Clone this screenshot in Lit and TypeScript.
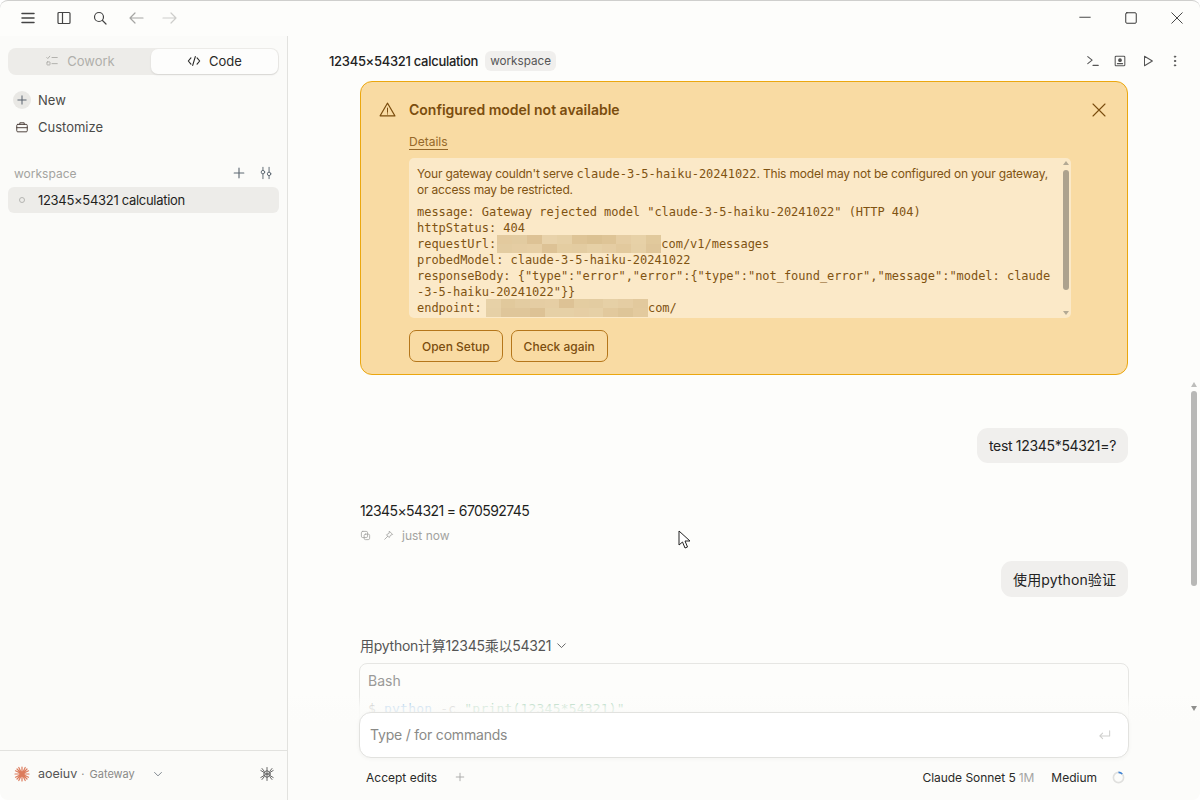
import { LitElement, html, css, svg } from "lit";
import { customElement } from "lit/decorators.js";

const ic = (size: number, body: unknown, sw = 1.2, cls = "") => html`<svg class=${cls} width=${size} height=${size} viewBox="0 0 16 16" fill="none" stroke="currentColor" stroke-width=${sw} stroke-linecap="round" stroke-linejoin="round">${body}</svg>`;

const mosaic = (cols: number, rows: number, seed: number, tile: number) => {
  const cells = [];
  let v = seed;
  for (let i = 0; i < cols * rows; i++) {
    v = (v * 73 + 41) % 101;
    const a = 0.08 + (v / 101) * 0.2;
    cells.push(html`<i style="background:rgba(170,125,60,${a.toFixed(2)});width:${tile}px;height:9px"></i>`);
  }
  return cells;
};

@customElement("app-root")
export class AppRoot extends LitElement {
  static styles = css`
    :host { display: block; width: 1200px; height: 800px; overflow: hidden; background: #fff; font-family: Inter, "Noto Sans CJK SC", sans-serif; color: #1f1f1d; }
    * { box-sizing: border-box; }
    .window { width: 1200px; height: 800px; background: #fdfdfb; border-top: 1px solid #cfcfcd; border-radius: 8px; overflow: hidden; display: flex; flex-direction: column; position: relative; }
    .titlebar { height: 35px; flex: none; display: flex; align-items: center; padding: 0 0 1px 20px; color: #444; }
    .tb { width: 16px; height: 16px; display: flex; align-items: center; justify-content: center; }
    .tbgroup { display: flex; align-items: center; gap: 20px; }
    .muted1 { color: #a5a5a3; }
    .muted2 { color: #cdcdcb; margin-left: -2px; }
    .winctl { margin-left: auto; display: flex; align-items: center; gap: 34px; padding-right: 17px; color: #333; }
    .body { flex: 1; display: flex; min-height: 0; }
    .side { width: 288px; flex: none; background: #fbfbf9; border-right: 1px solid #e2e2df; display: flex; flex-direction: column; padding-top: 12px; }
    .tabs { margin: 0 8px; width: 271px; height: 27px; background: #edece9; border-radius: 8px; display: flex; padding: 1px; }
    .tab { flex: 1; display: flex; align-items: center; justify-content: center; gap: 8px; font-size: 13px; color: #b0afab; padding-bottom: 1px; }
    .tab.on { background: #fdfdfc; border-radius: 7px; color: #2a2a28; box-shadow: 0 1px 2px rgba(0,0,0,.1); flex: none; width: 127px; margin-left: auto; }
    .nav { display: flex; align-items: center; gap: 7px; font-size: 13px; color: #4a4a48; height: 27px; padding-left: 13px; }
    .new { margin-top: 11px; }
    .dot { width: 18px; height: 18px; border-radius: 50%; background: #e9e8e5; display: flex; align-items: center; justify-content: center; color: #55606b; }
    .navic { width: 18px; display: flex; justify-content: center; color: #4a3d38; }
    .wshead { margin-top: 21px; height: 24px; display: flex; align-items: center; padding: 0 14px; font-size: 12px; color: #a3a3a0; }
    .wsicons { margin-left: auto; display: flex; gap: 13px; align-items: center; color: #5d6872; }
    .row { margin: 2px 8px 0; width: 271px; height: 26px; background: #edece9; border-radius: 6px; display: flex; align-items: center; padding-left: 11px; gap: 13px; font-size: 13px; letter-spacing: -0.3px; color: #1f1f1d; }
    .ring { width: 6px; height: 6px; border: 1px solid #b5b5b2; border-radius: 50%; }
    .foot { margin-top: auto; height: 50px; border-top: 1px solid #e2e2df; display: flex; align-items: center; padding: 0 12px 4px 14px; font-size: 12.5px; color: #555; }
    .foot .gw { color: #8a8a88; font-size: 11px; margin-left: 4px; word-spacing: 2px; }
    .foot .logo { margin-right: 8px; display: flex; }
    .foot .chev { margin-left: 18px; color: #77808a; display: flex; }
    .foot .bug { margin-left: auto; color: #666; display: flex; }
    .main { flex: 1; min-width: 0; display: flex; flex-direction: column; position: relative; }
    .head { height: 45px; flex: none; display: flex; align-items: center; padding: 5px 18px 0 41px; }
    .title { font-size: 13px; font-weight: 500; color: #222; letter-spacing: -0.3px; }
    .chip { margin-left: 7px; font-size: 11.7px; color: #555; background: #f0efed; border-radius: 6px; padding: 2px 5px; height: 20px; line-height: 16px; }
    .headic { margin-left: auto; display: flex; gap: 13.5px; color: #555; align-items: center; }
    .col { width: 768px; margin: 0 auto; flex: 1; display: flex; flex-direction: column; min-height: 0; }
    .col > * { flex: none; }
    .banner { width: 768px; height: 294px; background: #f9dba3; border: 1px solid #eba70f; border-radius: 12px; padding: 0 0 0 48px; position: relative; color: #7b4d0e; }
    .bhead { height: 53px; padding-top: 19px; line-height: 18px; font-size: 14px; font-weight: 600; }
    .warn { position: absolute; left: 18px; top: 19px; display: flex; }
    .bclose { position: absolute; right: 20px; top: 20px; display: flex; }
    .details { display: block; width: fit-content; font-size: 12px; line-height: 14px; color: #95682a; border-bottom: 1px solid #95682a; }
    .code { position: relative; width: 662px; height: 160px; margin-top: 8px; background: #fbe9c8; border-radius: 5px; padding: 8px; overflow: hidden; font-size: 12px; line-height: 16px; color: #7f5312; }
    .code code, .code pre { font-family: "DejaVu Sans Mono", monospace; font-size: 12px; letter-spacing: -0.03px; }
    pre { margin: 6px 0 0; line-height: 16px; white-space: pre; }
    .msg { width: 640px; display: block; letter-spacing: -0.19px; }
    .red { display: inline-flex; flex-wrap: wrap; vertical-align: top; height: 18px; margin-block: -1px; background: rgba(235,215,175,.85); }
    .r1 { width: 164px; margin-left: -6px; }
    .r2 { width: 162px; margin-left: -3px; }
    .sthumb { position: absolute; right: 2px; top: 12px; width: 6px; height: 120px; background: #ada28d; border-radius: 3px; }
    .aup, .adn { position: absolute; right: 2px; width: 0; height: 0; border-left: 3px solid transparent; border-right: 3px solid transparent; }
    .aup { top: 3px; border-bottom: 4px solid #b3a994; }
    .adn { bottom: 3px; border-top: 4px solid #b3a994; }
    .btns { display: flex; gap: 8px; margin-top: 12px; }
    .btn { height: 32px; padding: 0 12px; border: 1px solid #b5761a; border-radius: 7px; display: flex; align-items: center; font-size: 12px; font-weight: 500; color: #7b4d0e; }
    .bubble { align-self: flex-end; background: #f0efed; border-radius: 11px; height: 35px; padding: 0 12px; display: flex; align-items: center; color: #222; }
    .b1 { margin-top: 53px; font-size: 14px; letter-spacing: -0.32px; }
    .b2 { margin-top: 18px; height: 36px; font-size: 14px; letter-spacing: 0.1px; }
    .answer { margin-top: 39px; font-size: 14px; line-height: 18px; letter-spacing: -0.6px; color: #1f1f1d; }
    .meta { margin-top: 7px; height: 16px; display: flex; align-items: center; font-size: 12px; color: #a3a3a0; gap: 12px; }
    .stamp { margin-left: -4px; }
    .tool { margin-top: 38px; height: 20px; font-size: 14px; letter-spacing: -0.26px; color: #555; display: flex; align-items: center; gap: 5px; }
    .bash { margin: 8px -1px 0; height: 140px; border: 1px solid #e6e6e3; border-radius: 8px; padding: 8px; font-size: 14px; color: #9a9a98; position: relative; }
    .bash pre { margin: 12px 0 0; font-family: "DejaVu Sans Mono", monospace; font-size: 13px; letter-spacing: 0.2px; color: #8a8a88; }
    .kw { color: #5a9bd8; }
    .str { color: #6fb58a; }
    .fade { position: absolute; left: 0; right: 0; bottom: 0; height: 105px; background: linear-gradient(to bottom, rgba(252,252,250,0), rgba(252,252,250,.8) 12px, #fcfcfa 30px); }
    .dock { position: absolute; left: 71px; bottom: 0; width: 770px; height: 88px; }
    .composer { height: 46px; background: #fff; border: 1px solid #e2e2df; border-radius: 12px; box-shadow: 0 1px 4px rgba(0,0,0,.04); display: flex; align-items: center; padding: 0 16px 1px 10px; font-size: 14px; letter-spacing: -0.2px; color: #8a8a87; }
    .enter { margin-left: auto; color: #cfcfcd; display: flex; }
    .tools { height: 38px; display: flex; align-items: center; font-size: 12px; color: #2a2a28; padding: 0 4px 0 7px; }
    .plus { margin-left: 18px; color: #a5a5a3; display: flex; }
    .model { margin-left: auto; letter-spacing: -0.05px; }
    .onem { color: #a5a5a3; margin-left: 3px; }
    .med { margin-left: 17px; }
    .spin { margin-left: 15px; display: flex; }
    .mscroll { position: absolute; right: 3px; top: 346px; width: 6px; height: 329px; }
    .mthumb { position: absolute; left: 0; top: 9px; width: 6px; height: 195px; background: #b8b8b6; border-radius: 3px; }
    .mup, .mdn { position: absolute; left: 0; width: 0; height: 0; border-left: 3px solid transparent; border-right: 3px solid transparent; }
    .mup { top: 0; border-bottom: 5px solid #bdbdbb; }
    .mdn { bottom: 0; border-top: 5px solid #8f8f8d; }
    .cursor { position: absolute; left: 390px; top: 494px; display: flex; }
  `;

  render() {
    return html`<div class="window">
      <div class="titlebar">
        <div class="tbgroup">
          <span class="tb">${ic(16, svg`<path d="M2 3.5h12M2 8h12M2 12.5h12"/>`, 1.5)}</span>
          <span class="tb">${ic(16, svg`<rect x="2" y="2.5" width="12" height="11" rx="1"/><path d="M6.5 2.5v11"/>`)}</span>
          <span class="tb">${ic(16, svg`<circle cx="7" cy="7" r="4.5"/><path d="M10.5 10.5 14 14"/>`)}</span>
          <span class="tb muted1">${ic(16, svg`<path d="M15 8H2M7 3 2 8l5 5"/>`)}</span>
          <span class="tb muted2">${ic(16, svg`<path d="M1 8h13M9 3l5 5-5 5"/>`)}</span>
        </div>
        <div class="winctl">
          ${ic(12, svg`<path d="M1 7h14"/>`, 1.2)}
          ${ic(12, svg`<rect x="1" y="1" width="14" height="14" rx="1.5"/>`, 1.3)}
          ${ic(12, svg`<path d="M1 1l14 14M15 1 1 15"/>`, 1.2)}
        </div>
      </div>
      <div class="body">
        <aside class="side">
          <div class="tabs">
            <div class="tab">${ic(14, svg`<path d="M2 4l1.2 1.2L5.5 2.5M8 4h6M8 11h6"/><rect x="2.2" y="9" width="3.5" height="3.5" rx=".5"/>`, 1.1)}Cowork</div>
            <div class="tab on">${ic(14, svg`<path d="M4.5 4.5 1.5 8l3 3.5M11.5 4.5l3 3.5-3 3.5M9.5 3l-3 10"/>`, 1.3)}Code</div>
          </div>
          <div class="nav new"><span class="dot">${ic(12, svg`<path d="M8 2.5v11M2.5 8h11"/>`, 1.3)}</span>New</div>
          <div class="nav"><span class="navic">${ic(14, svg`<rect x="2" y="5" width="12" height="8.5" rx="1.2"/><path d="M5.5 5V3.2h5V5M2 8.8h12"/>`, 1.1)}</span>Customize</div>
          <div class="wshead">workspace
            <div class="wsicons">
              ${ic(14, svg`<path d="M8 2.5v11M2.5 8h11"/>`, 1.3)}
              ${ic(14, svg`<path d="M4.5 1.5v3.5M4.5 9v5.5M11.5 1.5v5.5M11.5 11v3.5"/><circle cx="4.5" cy="7" r="2"/><circle cx="11.5" cy="9" r="2"/>`, 1.1)}
            </div>
          </div>
          <div class="row"><span class="ring"></span>12345×54321 calculation</div>
          <div class="foot">
            <span class="logo">${ic(16, svg`<g stroke="#dc7b5c" stroke-width="1.2"><path d="M8 1v14M1 8h14M3 3l10 10M13 3 3 13M4.8 1.5l6.4 13M11.2 1.5l-6.4 13M1.5 4.8l13 6.4M14.5 4.8l-13 6.4"/></g>`)}</span>
            aoeiuv<span class="gw">· Gateway</span>
            <span class="chev">${ic(10, svg`<path d="M2.5 5.5 8 11l5.5-5.5"/>`, 1.5)}</span>
            <span class="bug">${ic(16, svg`<circle cx="8" cy="8" r="3.2"/><path d="M5 6.5l6 3M11 6.5l-6 3M8 4.8v6.4M8 1.5v3M8 11.5v3M1.8 4.5l3.4 2M14.2 4.5l-3.4 2M1.8 11.5l3.4-2M14.2 11.5l-3.4-2M3 2.5l2 2.5M13 2.5l-2 2.5M3 13.5l2-2.5M13 13.5l-2-2.5"/>`, 1)}</span>
          </div>
        </aside>
        <main class="main">
          <div class="head">
            <span class="title">12345×54321 calculation</span>
            <span class="chip">workspace</span>
            <div class="headic">
              ${ic(14, svg`<path d="M2 3l5 4-5 4M8 13h6"/>`, 1.2)}
              ${ic(14, svg`<rect x="2.5" y="2.5" width="11" height="11" rx="1"/><circle cx="8" cy="7" r="1.5" fill="currentColor"/><path d="M5 11h6"/>`, 1.2)}
              ${ic(14, svg`<path d="M4 2.5v11l9-5.5z"/>`, 1.2)}
              ${ic(14, svg`<circle cx="8" cy="3" r=".8" fill="currentColor"/><circle cx="8" cy="8" r=".8" fill="currentColor"/><circle cx="8" cy="13" r=".8" fill="currentColor"/>`, 1)}
            </div>
          </div>
          <div class="col">
            <div class="banner">
              <span class="warn">${ic(17, svg`<path d="M8 2 1 14h14z"/><path d="M8 6.5v4M8 12v.3"/>`, 1)}</span>
              <span class="bclose">${ic(16, svg`<path d="M2 2l12 12M14 2 2 14"/>`, 1.1)}</span>
              <div class="bhead">Configured model not available</div>
              <span class="details">Details</span>
              <div class="code">
                <span class="msg">Your gateway couldn't serve <code>claude-3-5-haiku-20241022</code>. This model may not be configured on your gateway, or access may be restricted.</span>
                <pre>message: Gateway rejected model "claude-3-5-haiku-20241022" (HTTP 404)
httpStatus: 404
requestUrl: <span class="red r1">${mosaic(11, 2, 7, 14.9)}</span>com/v1/messages
probedModel: claude-3-5-haiku-20241022
responseBody: {"type":"error","error":{"type":"not_found_error","message":"model: claude
-3-5-haiku-20241022"}}
endpoint: <span class="red r2">${mosaic(11, 2, 23, 14.7)}</span>com/</pre>
                <span class="aup"></span><span class="sthumb"></span><span class="adn"></span>
              </div>
              <div class="btns"><div class="btn">Open Setup</div><div class="btn">Check again</div></div>
            </div>
            <div class="bubble b1">test 12345*54321=?</div>
            <div class="answer">12345×54321 = 670592745</div>
            <div class="meta">
              ${ic(11, svg`<rect x="2" y="2" width="9" height="9" rx="2"/><rect x="6" y="6" width="8" height="8" rx="2"/>`, 1.2)}
              ${ic(11, svg`<path d="M9.5 2 14 6.5 11 7.5 9 11 5 7 8.5 5zM7 9l-4.5 4.5"/>`, 1.2)}
              <span class="stamp">just now</span>
            </div>
            <div class="bubble b2">使用python验证</div>
            <div class="tool">用python计算12345乘以54321 ${ic(11, svg`<path d="M2.5 5.5 8 11l5.5-5.5"/>`, 1.3)}</div>
            <div class="bash">Bash<pre>$ <span class="kw">python</span> -c <span class="str">"print(12345*54321)"</span></pre></div>
          </div>
          <div class="fade"></div>
          <div class="dock">
            <div class="composer">Type / for commands<span class="enter">${ic(15, svg`<path d="M13.5 4v5.5H3M6 6.5l-3 3 3 3"/>`, 1.1)}</span></div>
            <div class="tools">
              <span>Accept edits</span>
              <span class="plus">${ic(10, svg`<path d="M8 2v12M2 8h12"/>`, 1.4)}</span>
              <span class="model">Claude Sonnet 5<span class="onem">1M</span></span>
              <span class="med">Medium</span>
              <span class="spin"><svg width="13" height="13" viewBox="0 0 14 14" fill="none" stroke-width="1.8"><circle cx="7" cy="7" r="5.5" stroke="#e0e0de"/><path d="M7 1.5a5.5 5.5 0 0 1 4 1.7" stroke="#3b82d6"/></svg></span>
            </div>
          </div>
          <div class="mscroll"><span class="mup"></span><span class="mthumb"></span><span class="mdn"></span></div>
          <svg class="cursor" width="14" height="20" viewBox="0 0 14 20" fill="#fff" stroke="#222" stroke-width="1"><path d="M1 1v14l3.5-3 2.5 6 2.5-1-2.5-6h5z"/></svg>
        </main>
      </div>
    </div>`;
  }
}
